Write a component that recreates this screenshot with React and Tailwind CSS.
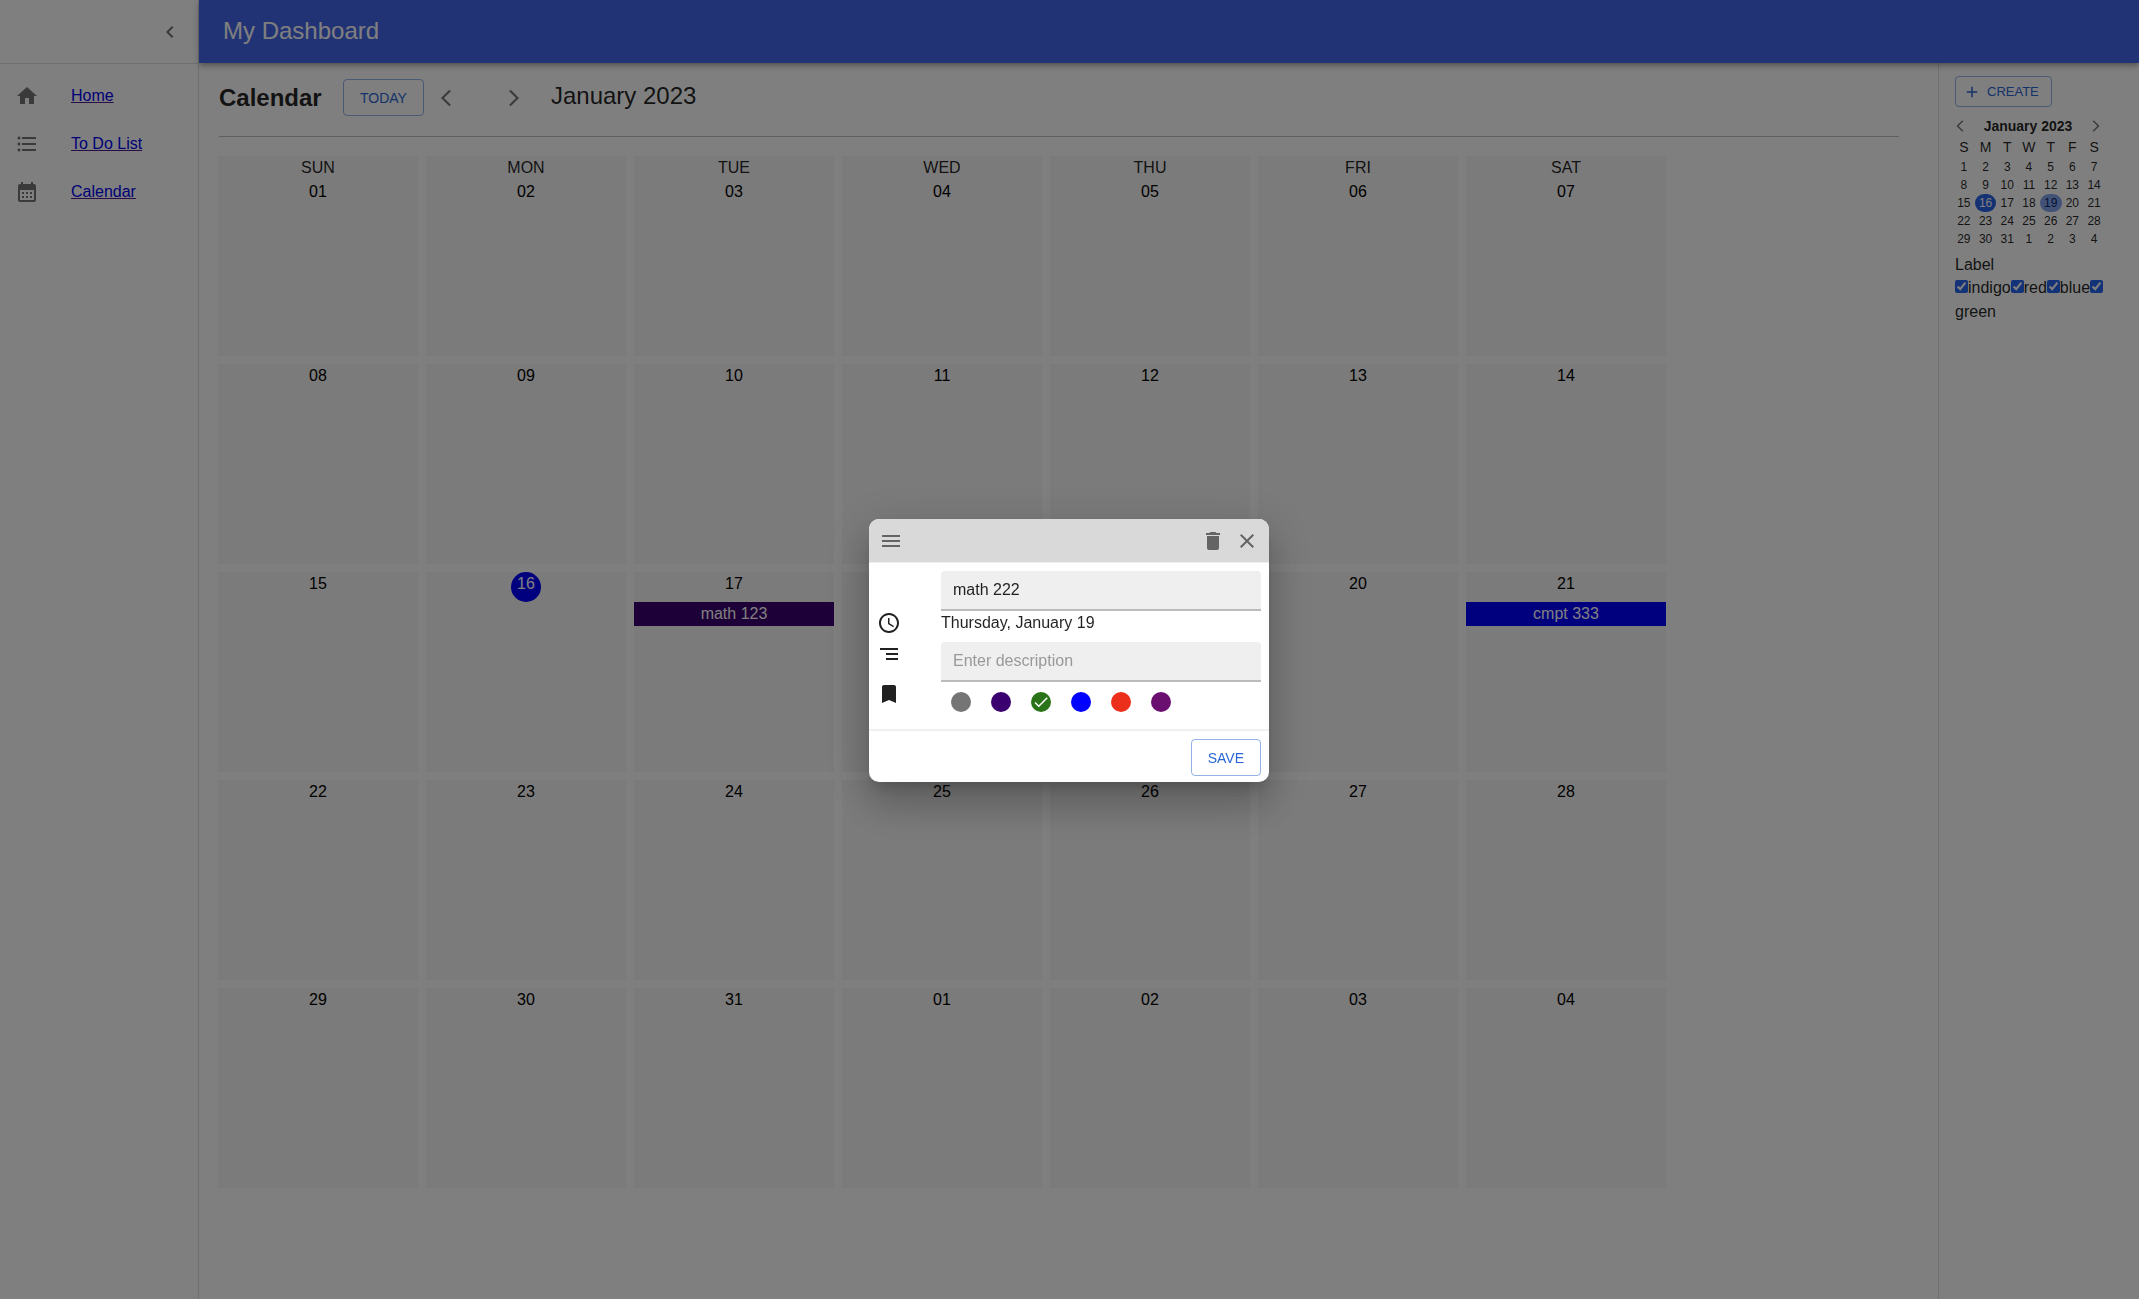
import React, { useState } from "react";

const iconPaths = {
  chevronLeft: "M15.41 7.41 14 6l-6 6 6 6 1.41-1.41L10.83 12z",
  home: "M10 20v-6h4v6h5v-8h3L12 3 2 12h3v8z",
  list: "M4 10.5c-.83 0-1.5.67-1.5 1.5s.67 1.5 1.5 1.5 1.5-.67 1.5-1.5-.67-1.5-1.5-1.5zm0-6c-.83 0-1.5.67-1.5 1.5S3.17 7.5 4 7.5 5.5 6.83 5.5 6 4.83 4.5 4 4.5zm0 12c-.83 0-1.5.68-1.5 1.5s.68 1.5 1.5 1.5 1.5-.68 1.5-1.5-.67-1.5-1.5-1.5zM7 19h14v-2H7v2zm0-6h14v-2H7v2zm0-8v2h14V5H7z",
  calendar:
    "M19 4h-1V2h-2v2H8V2H6v2H5c-1.11 0-1.99.9-1.99 2L3 20c0 1.1.89 2 2 2h14c1.1 0 2-.9 2-2V6c0-1.1-.9-2-2-2zm0 16H5V10h14v10zM9 14H7v-2h2v2zm4 0h-2v-2h2v2zm4 0h-2v-2h2v2zm-8 4H7v-2h2v2zm4 0h-2v-2h2v2zm4 0h-2v-2h2v2z",
  back: "M17.77 3.77 16 2 6 12l10 10 1.77-1.77L9.54 12z",
  forward: "M6.23 20.23 8 22l10-10L8 2 6.23 3.77 14.46 12z",
  add: "M19 13h-6v6h-2v-6H5v-2h6V5h2v6h6z",
  menu: "M3 18h18v-2H3v2zm0-5h18v-2H3v2zm0-7v2h18V6H3z",
  trash: "M6 19c0 1.1.9 2 2 2h8c1.1 0 2-.9 2-2V7H6zM19 4h-3.5l-1-1h-5l-1 1H5v2h14z",
  close:
    "M19 6.41 17.59 5 12 10.59 6.41 5 5 6.41 10.59 12 5 17.59 6.41 19 12 13.41 17.59 19 19 17.59 13.41 12z",
  clock:
    "M11.99 2C6.47 2 2 6.48 2 12s4.47 10 9.99 10C17.52 22 22 17.52 22 12S17.52 2 11.99 2zM12 20c-4.42 0-8-3.58-8-8s3.58-8 8-8 8 3.58 8 8-3.58 8-8 8zm.5-13H11v6l5.25 3.15.75-1.23-4.5-2.67z",
  segment: "M9 18h12v-2H9v2zM3 6v2h18V6H3zm6 7h12v-2H9v2z",
  bookmark: "M17 3H7c-1.1 0-1.99.9-1.99 2L5 21l7-3 7 3V5c0-1.1-.9-2-2-2z",
  check: "M9 16.17 4.83 12l-1.42 1.41L9 19 21 7l-1.41-1.41z",
};

function Icon({ name, className = "size-6" }) {
  return (
    <svg viewBox="0 0 24 24" fill="currentColor" aria-hidden="true" className={`block shrink-0 ${className}`}>
      <path d={iconPaths[name]} />
    </svg>
  );
}

const outlined =
  "flex items-center justify-center rounded border border-[#2b66d4]/50 text-[#2b66d4]";

const weekdays = ["SUN", "MON", "TUE", "WED", "THU", "FRI", "SAT"];
const days = [...Array(35)].map((_, i) => (i < 31 ? i + 1 : i - 30));
const events = {
  16: { title: "math 123", color: "bg-[#3b006f]" },
  20: { title: "cmpt 333", color: "bg-[#0000ff]" },
};

function Sidebar() {
  const links = [
    ["home", "Home"],
    ["list", "To Do List"],
    ["calendar", "Calendar"],
  ];
  return (
    <nav className="w-[199px] shrink-0 border-r border-black/12">
      <div className="flex h-16 items-center justify-end border-b border-black/12 px-2">
        <button type="button" aria-label="Collapse menu" className="p-2 text-black/54">
          <Icon name="chevronLeft" />
        </button>
      </div>
      <ul className="py-2">
        {links.map(([icon, label]) => (
          <li key={label} className="flex h-12 items-center pl-[15px]">
            <span className="w-14 text-black/54">
              <Icon name={icon} />
            </span>
            <a href="#" className="text-[#0000ee] underline decoration-[#551a8b]">
              {label}
            </a>
          </li>
        ))}
      </ul>
    </nav>
  );
}

function DayCell({ day, index }) {
  const event = events[index];
  const today = index === 15;
  return (
    <div className="h-[200px] bg-[#f6f6f6] text-center">
      {index < 7 && <p>{weekdays[index]}</p>}
      <div className="flex h-[30px] justify-center">
        <span className={today ? "size-[30px] rounded-full bg-[#0000ff] text-white" : "text-black"}>
          {String(day).padStart(2, "0")}
        </span>
      </div>
      {event && <div className={`text-white ${event.color}`}>{event.title}</div>}
    </div>
  );
}

function CalendarView() {
  return (
    <main className="min-w-0 flex-1 pr-[39px] pl-[19px]">
      <div className="ml-px flex items-center border-b border-black/25 pt-4 pb-5">
        <h1 className="w-[124px] text-2xl font-bold">Calendar</h1>
        <button type="button" className={`${outlined} h-[37px] px-4 text-sm`}>
          TODAY
        </button>
        <button type="button" aria-label="Previous month" className="ml-3 text-black/54">
          <Icon name="back" className="size-5" />
        </button>
        <button type="button" aria-label="Next month" className="ml-12 text-black/54">
          <Icon name="forward" className="size-5" />
        </button>
        <h2 className="ml-[27px] pb-1 text-2xl">January 2023</h2>
      </div>
      <div className="mt-[19px] grid grid-cols-[repeat(7,200px)] gap-2">
        {days.map((day, i) => (
          <DayCell key={i} day={day} index={i} />
        ))}
      </div>
    </main>
  );
}

function MiniCalendar() {
  const cell = (i) => {
    if (i === 15) return "rounded-full bg-[#2864e6] text-white";
    if (i === 18) return "rounded-full bg-[#84a5ee] text-[#0b2a6b]";
    return "";
  };
  return (
    <section className="mt-[9px] -ml-0.5 w-[152px]">
      <div className="flex h-5 items-center justify-between pr-0.5">
        <button type="button" aria-label="Previous month" className="text-black/54">
          <Icon name="back" className="size-3.5" />
        </button>
        <h3 className="text-sm font-bold">January 2023</h3>
        <button type="button" aria-label="Next month" className="text-black/54">
          <Icon name="forward" className="size-3.5" />
        </button>
      </div>
      <table className="w-full table-fixed text-center">
        <thead>
          <tr className="text-sm leading-[22px]">
            {["S", "M", "T", "W", "T", "F", "S"].map((d, i) => (
              <th key={i} className="p-0 font-normal">
                {d}
              </th>
            ))}
          </tr>
        </thead>
        <tbody className="text-xs leading-[18px]">
          {[0, 1, 2, 3, 4].map((row) => (
            <tr key={row}>
              {days.slice(row * 7, row * 7 + 7).map((day, i) => (
                <td key={i} className="p-0">
                  <div className={cell(row * 7 + i)}>{day}</div>
                </td>
              ))}
            </tr>
          ))}
        </tbody>
      </table>
    </section>
  );
}

function RightPanel() {
  return (
    <aside className="w-[201px] shrink-0 border-l border-black/12 px-4 pt-[13px]">
      <button type="button" className={`${outlined} h-[31px] gap-1.5 pr-3 pl-[7px] text-[13px]`}>
        <Icon name="add" className="size-[18px]" />
        CREATE
      </button>
      <MiniCalendar />
      <fieldset className="mt-1.5">
        <legend className="leading-[22px]">Label</legend>
        {["indigo", "red", "blue", "green"].map((name) => (
          <label key={name}>
            <input type="checkbox" defaultChecked className="m-0 size-[13px] accent-[#2864f0]" />
            {name}
          </label>
        ))}
      </fieldset>
    </aside>
  );
}

const swatches = [
  ["Gray", "bg-[#757575]"],
  ["Indigo", "bg-[#3b006f]"],
  ["Green", "bg-[#2a7318]"],
  ["Blue", "bg-[#0000ff]"],
  ["Red", "bg-[#ec2f1a]"],
  ["Purple", "bg-[#6a0f70]"],
];

function EventDialog() {
  const [selected, setSelected] = useState(2);
  const field =
    "h-10 w-full rounded-t border-b-2 border-[#bbbbbb] bg-[#efefef] px-3 outline-none placeholder:text-[#999999]";
  return (
    <div className="fixed inset-0 flex items-center justify-center bg-black/50 pt-0.5 pr-px">
      <form
        role="dialog"
        aria-label="Edit event"
        onSubmit={(e) => e.preventDefault()}
        className="w-[400px] overflow-hidden rounded-[10px] bg-white shadow-[0_11px_15px_-7px_rgba(0,0,0,0.2),0_24px_38px_3px_rgba(0,0,0,0.14),0_9px_46px_8px_rgba(0,0,0,0.12)]"
      >
        <div className="flex h-11 items-center border-b border-[#eeeeee] bg-[#d9d9d9] px-2.5 text-black/54">
          <Icon name="menu" />
          <button type="button" aria-label="Delete event" className="ml-auto">
            <Icon name="trash" />
          </button>
          <button type="button" aria-label="Close" className="ml-2.5">
            <Icon name="close" />
          </button>
        </div>
        <div className="grid grid-cols-[64px_1fr] items-start px-2 pt-2 pb-[7px]">
          <span />
          <input type="text" aria-label="Title" defaultValue="math 222" className={field} />
          <Icon name="clock" />
          <p>Thursday, January 19</p>
          <span className="mt-[7px]">
            <Icon name="segment" />
          </span>
          <input type="text" aria-label="Description" placeholder="Enter description" className={`${field} mt-[7px]`} />
          <Icon name="bookmark" />
          <div className="flex">
            {swatches.map(([name, color], i) => (
              <button
                key={name}
                type="button"
                aria-label={name}
                aria-pressed={selected === i}
                onClick={() => setSelected(i)}
                className={`m-2.5 flex size-5 items-center justify-center rounded-full text-white ${color}`}
              >
                {selected === i && <Icon name="check" className="size-[18px]" />}
              </button>
            ))}
          </div>
        </div>
        <div className="flex justify-end border-t-2 border-[#f0f0f0] px-2 pt-2 pb-1.5">
          <button type="submit" className={`${outlined} h-[37px] px-4 text-sm`}>
            SAVE
          </button>
        </div>
      </form>
    </div>
  );
}

export default function App() {
  return (
    <div className="flex min-h-screen bg-white font-['Liberation_Sans',Arial,sans-serif] text-base text-black/87">
      <Sidebar />
      <div className="flex min-w-0 flex-1 flex-col">
        <header className="relative flex h-[63px] items-center bg-[#4466ea] px-6 pb-px text-2xl text-white shadow-[0_2px_4px_-1px_rgba(0,0,0,0.2),0_4px_5px_0_rgba(0,0,0,0.14),0_1px_10px_0_rgba(0,0,0,0.12)]">
          My Dashboard
        </header>
        <div className="flex flex-1">
          <CalendarView />
          <RightPanel />
        </div>
      </div>
      <EventDialog />
    </div>
  );
}
